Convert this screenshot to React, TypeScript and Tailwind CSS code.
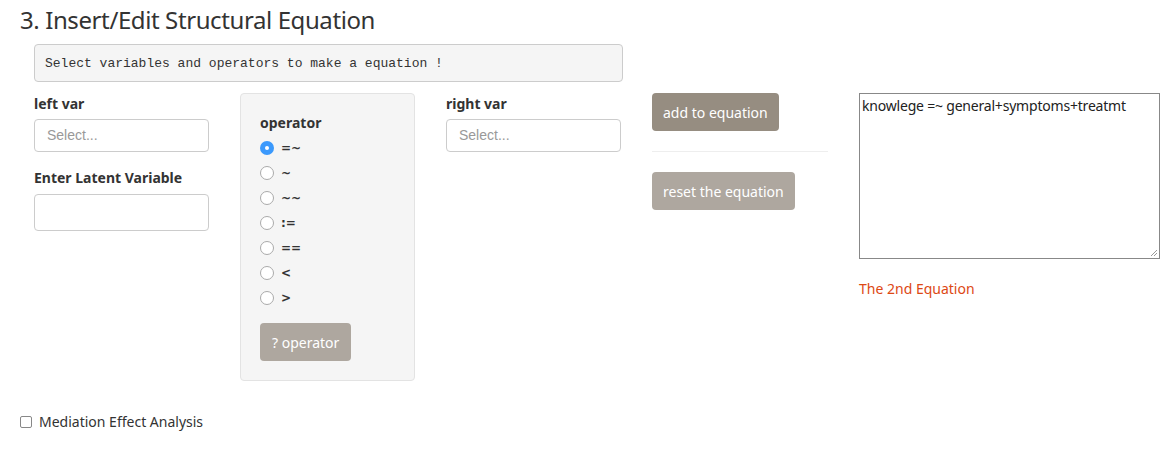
const ops = ["=~", "~", "~~", ":=", "==", "<", ">"];

const Radio = ({ checked }: { checked: boolean }) =>
  checked ? (
    <span className="flex h-[14px] w-[14px] items-center justify-center rounded-full bg-[#3b99fc]">
      <span className="h-[4px] w-[4px] rounded-full bg-white"></span>
    </span>
  ) : (
    <span className="h-[14px] w-[14px] rounded-full border border-[#aaa] bg-white"></span>
  );

const SelectBox = () => (
  <div className="flex h-[33px] w-[175px] items-center rounded-[4px] border border-[#ccc] bg-white px-3 font-['Liberation_Sans',sans-serif] text-[14px] text-[#999]">
    Select...
  </div>
);

export default function App() {
  return (
    <div className="h-[452px] w-[1168px] bg-white pl-[20px] font-['Noto_Sans',sans-serif] text-[14px] text-[#333]">
      <h3 className="pt-[5px] text-[24px] leading-[30px] tracking-[-0.4px] text-[#333]">
        3. Insert/Edit Structural Equation
      </h3>

      <div className="ml-[14px] mt-[9px] flex h-[38px] w-[589px] items-center rounded-[4px] border border-[#ccc] bg-[#f5f5f5] px-[10px] pt-[2px] font-['Liberation_Mono',monospace] text-[13px] text-[#333]">
        Select variables and operators to make a equation !
      </div>

      <div className="ml-[14px] mt-[11px] flex gap-[31px]">
        {/* left var */}
        <div className="w-[175px]">
          <div className="mt-[1px] h-[25px] font-bold leading-[20px]">left var</div>
          <SelectBox />
          <div className="mt-[16px] h-[26px] font-bold leading-[20px]">Enter Latent Variable</div>
          <div className="h-[37px] w-[175px] rounded-[4px] border border-[#ccc] bg-white"></div>
        </div>

        {/* operator well */}
        <div className="h-[288px] w-[175px] rounded-[4px] border border-[#e3e3e3] bg-[#f5f5f5] px-[19px] pt-[19px]">
          <div className="mb-[2px] font-bold leading-[20px]">operator</div>
          <div className="flex flex-col">
            {ops.map((op, i) => (
              <div key={op} className="flex h-[25px] items-center gap-[7px]">
                <Radio checked={i === 0} />
                <span className="font-['DejaVu_Sans',sans-serif] text-[12px] font-bold">{op}</span>
              </div>
            ))}
          </div>
          <button className="mt-[13px] h-[38px] rounded-[4px] bg-[#aea79f] px-[12px] text-[14px] text-white">
            ? operator
          </button>
        </div>

        {/* right var */}
        <div className="w-[175px]">
          <div className="mt-[1px] h-[25px] font-bold leading-[20px]">right var</div>
          <SelectBox />
        </div>

        {/* buttons */}
        <div className="w-[176px]">
          <button className="h-[38px] rounded-[4px] bg-[#968d81] px-[11px] text-white">
            add to equation
          </button>
          <hr className="mt-[20px] border-[#eee]" />
          <button className="mt-[20px] h-[38px] rounded-[4px] bg-[#aea79f] px-[11px] text-white">
            reset the equation
          </button>
        </div>

        {/* textarea */}
        <div className="w-[301px]">
          <div className="relative h-[166px] w-[301px] border border-[#888] bg-white px-[2px] pt-[2px] leading-[20px] tracking-[-0.2px] text-[#222]">
            knowlege =~ general+symptoms+treatmt
            <svg className="absolute bottom-[1px] right-[1px]" width="8" height="8" viewBox="0 0 8 8">
              <path d="M1 7 L7 1 M4 7 L7 4" stroke="#999" strokeWidth="1" />
            </svg>
          </div>
          <div className="mt-[19px] text-[#dd4814]">The 2nd Equation</div>
        </div>
      </div>

      <label className="mt-[30px] flex items-center gap-[7px]">
        <span className="h-[12px] w-[12px] rounded-[2px] border border-[#888] bg-white"></span>
        <span>Mediation Effect Analysis</span>
      </label>
    </div>
  );
}
